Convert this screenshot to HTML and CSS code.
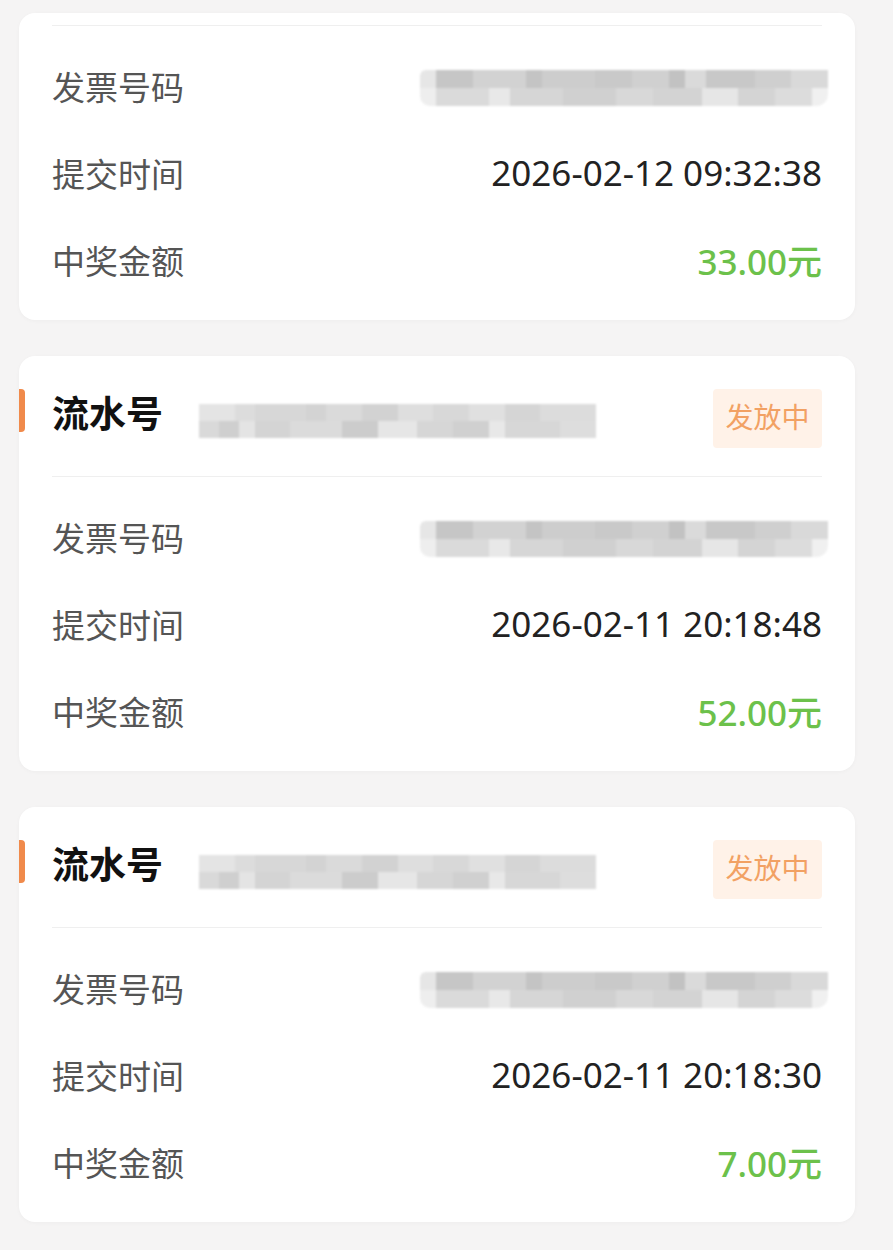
FILE: index.html
```html
<!DOCTYPE html>
<html>
  <head>
    <meta charset="utf-8">
    <link rel="stylesheet" href="styles.css">
  </head>
<body>
<div class="list">
  <!--first card is scrolled, only the lower part shows-->
  <div class="card card-cut">
    <div class="line"></div>
    <div class="rows">
      <div class="row">
        <span class="label">发票号码</span>
        <span class="mosaic mosaic-inv"></span>
      </div>
      <div class="row">
        <span class="label">提交时间</span>
        <span class="value">2026-02-12 09:32:38</span>
      </div>
      <div class="row">
        <span class="label">中奖金额</span>
        <span class="value money">33.00元</span>
      </div>
    </div>
  </div>

  <div class="card">
    <div class="head">
      <span class="title">流水号</span>
      <span class="mosaic mosaic-serial"></span>
      <span class="badge">发放中</span>
    </div>
    <div class="line"></div>
    <div class="rows">
      <div class="row">
        <span class="label">发票号码</span>
        <span class="mosaic mosaic-inv"></span>
      </div>
      <div class="row">
        <span class="label">提交时间</span>
        <span class="value">2026-02-11 20:18:48</span>
      </div>
      <div class="row">
        <span class="label">中奖金额</span>
        <span class="value money">52.00元</span>
      </div>
    </div>
  </div>

  <div class="card">
    <div class="head">
      <span class="title">流水号</span>
      <span class="mosaic mosaic-serial"></span>
      <span class="badge">发放中</span>
    </div>
    <div class="line"></div>
    <div class="rows">
      <div class="row">
        <span class="label">发票号码</span>
        <span class="mosaic mosaic-inv"></span>
      </div>
      <div class="row">
        <span class="label">提交时间</span>
        <span class="value">2026-02-11 20:18:30</span>
      </div>
      <div class="row">
        <span class="label">中奖金额</span>
        <span class="value money">7.00元</span>
      </div>
    </div>
  </div>
</div>
</body>
</html>
```

FILE: styles.css
```css
body{
  margin: 0;
  background-color: #f5f4f4;
  font-family: "Noto Sans", "Noto Sans CJK SC", sans-serif;
}
.list{
  display: flex;
  flex-direction: column;
  gap: 36px;
  padding: 13px 38px 30px 19px;
}
.card{
  position: relative;
  background-color: #fff;
  border-radius: 16px;
  box-shadow: 0 1px 4px rgba(0,0,0,0.03);
}
.card-cut{
  padding-top: 12px;
}
.head{
  display: flex;
  align-items: center;
  padding: 33px 33px 28px 33px;
}
.head::before{
  content: "";
  position: absolute;
  left: 0;
  top: 33px;
  width: 6px;
  height: 43px;
  border-radius: 0 4px 4px 0;
  background-color: #f08a4b;
}
.title{
  font-size: 37px;
  font-weight: bold;
  color: #111;
  line-height: 49px;
  padding-bottom: 10px;
}
.badge{
  margin-left: auto;
  width: 109px;
  height: 59px;
  line-height: 57px;
  text-align: center;
  font-size: 28px;
  color: #f2a163;
  background-color: #fff2e8;
  border-radius: 4px;
}
.line{
  height: 1px;
  margin: 0 33px;
  background-color: #efefef;
}
.rows{
  padding: 16px 0 17px 0;
}
.row{
  display: flex;
  align-items: center;
  justify-content: space-between;
  height: 87px;
  padding: 0 33px;
}
.label{
  font-size: 33px;
  color: #555;
}
.value{
  font-size: 35px;
  color: #222;
}
.money{
  color: #6cc14b;
  font-weight: 500;
}
.mosaic{
  display: block;
  filter: blur(1px);
}
.mosaic-serial{
  width: 397px;
  height: 34px;
  margin-left: 36px;
  margin-top: 4px;
  background:
    linear-gradient(90deg, #e4e4e4 0 9%, #dcdcdc 9% 14%, #d7d7d7 14% 27%, #d3d3d3 27% 32%, #dadada 32% 41%, #d2d2d2 41% 50%, #dedede 50% 59%, #d8d8d8 59% 68%, #e0e0e0 68% 77%, #d5d5d5 77% 86%, #dcdcdc 86% 100%) top / 100% 50% no-repeat,
    linear-gradient(90deg, #d9d9d9 0 5%, #cfcfcf 5% 10%, #e4e4e4 10% 14%, #d4d4d4 14% 23%, #dbdbdb 23% 36%, #cccccc 36% 45%, #e6e6e6 45% 55%, #d6d6d6 55% 64%, #d0d0d0 64% 73%, #e8e8e8 73% 77%, #d7d7d7 77% 91%, #dddddd 91% 100%) bottom / 100% 50% no-repeat;
}
.mosaic-inv{
  width: 408px;
  height: 36px;
  margin-right: -6px;
  margin-top: 4px;
  border-radius: 6px 0 12px 10px;
  background:
    linear-gradient(90deg, #e6e6e6 0 4%, #c6c6c6 4% 13%, #d2d2d2 13% 26%, #c4c4c4 26% 30%, #cdcdcd 30% 43%, #c9c9c9 43% 52%, #d0d0d0 52% 61%, #c2c2c2 61% 65%, #dadada 65% 70%, #c8c8c8 70% 82%, #cfcfcf 82% 91%, #d9d9d9 91% 100%) top / 100% 50% no-repeat,
    linear-gradient(90deg, #eeeeee 0 4%, #dadada 4% 17%, #e8e8e8 17% 22%, #d6d6d6 22% 35%, #d0d0d0 35% 48%, #d8d8d8 48% 57%, #d3d3d3 57% 69%, #e6e6e6 69% 78%, #d4d4d4 78% 87%, #dcdcdc 87% 96%, #f0f0f0 96% 100%) bottom / 100% 50% no-repeat;
}
```
